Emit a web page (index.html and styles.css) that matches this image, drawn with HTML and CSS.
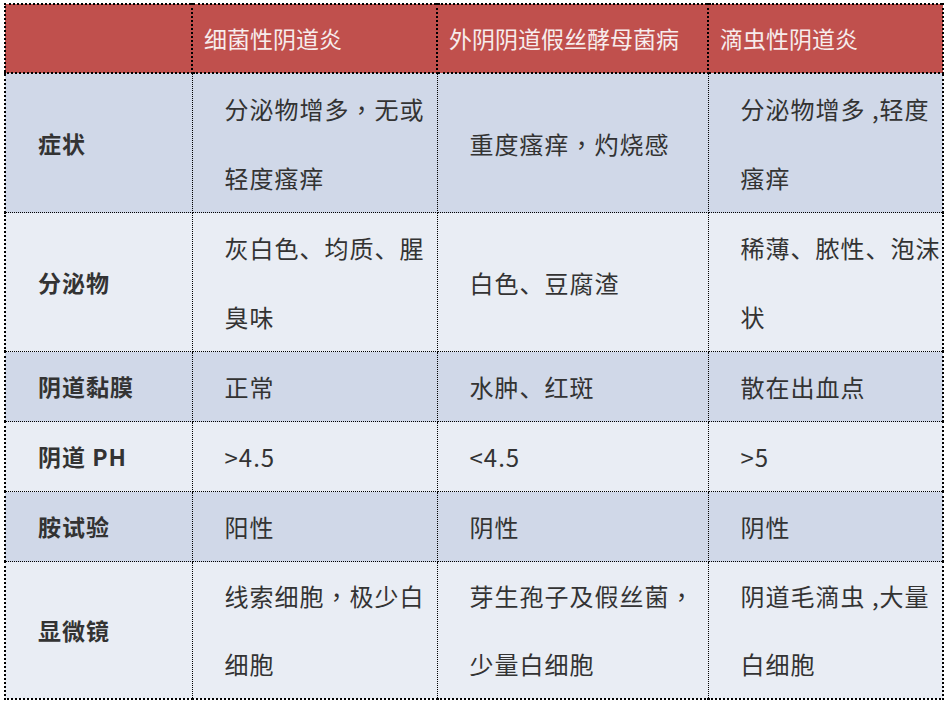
FILE: index.html
```html
<!DOCTYPE html>
<html lang="zh-CN">
<head>
<meta charset="utf-8">
<title>阴道炎对比</title>
<link rel="stylesheet" href="styles.css">
</head>
<body>
<table class="cmp">
  <colgroup>
    <col class="c1"><col class="c2"><col class="c3"><col class="c4">
  </colgroup>
  <thead>
    <tr>
      <th></th>
      <th>细菌性阴道炎</th>
      <th>外阴阴道假丝酵母菌病</th>
      <th>滴虫性阴道炎</th>
    </tr>
  </thead>
  <tbody>
    <tr class="dark">
      <td class="lbl">症状</td>
      <td>分泌物增多<span class="pc" lang="zh-TW">，</span>无或<br>轻度瘙痒</td>
      <td>重度瘙痒<span class="pc" lang="zh-TW">，</span>灼烧感</td>
      <td>分泌物增多 ,轻度<br>瘙痒</td>
    </tr>
    <tr class="light">
      <td class="lbl">分泌物</td>
      <td>灰白色、均质、腥<br>臭味</td>
      <td>白色、豆腐渣</td>
      <td>稀薄、脓性、泡沫<br>状</td>
    </tr>
    <tr class="dark">
      <td class="lbl">阴道黏膜</td>
      <td>正常</td>
      <td>水肿、红斑</td>
      <td>散在出血点</td>
    </tr>
    <tr class="light">
      <td class="lbl">阴道 PH</td>
      <td>&gt;4.5</td>
      <td>&lt;4.5</td>
      <td>&gt;5</td>
    </tr>
    <tr class="dark">
      <td class="lbl">胺试验</td>
      <td>阳性</td>
      <td>阴性</td>
      <td>阴性</td>
    </tr>
    <tr class="light last">
      <td class="lbl">显微镜</td>
      <td>线索细胞<span class="pc" lang="zh-TW">，</span>极少白<br>细胞</td>
      <td>芽生孢子及假丝菌<span class="pc" lang="zh-TW">，</span><br>少量白细胞</td>
      <td>阴道毛滴虫 ,大量<br>白细胞</td>
    </tr>
  </tbody>
</table>
</body>
</html>
```

FILE: styles.css
```css
html, body {
  margin: 0;
  padding: 0;
  background: #ffffff;
}
body {
  padding: 3px 0 0 4px;
  font-family: "Noto Sans CJK SC", "Noto Sans", sans-serif;
}
.cmp {
  border-collapse: collapse;
  table-layout: fixed;
  width: 940px;
  border: 2px dotted #000;
}
.c1 { width: 187px; }
.c2 { width: 245px; }
.c3 { width: 271px; }
.c4 { width: 235px; }
.cmp th {
  background: #c0504d;
  color: #f7ecec;
  font-weight: normal;
  font-size: 23px;
  text-align: left;
  height: 67px;
  padding: 0 0 0 11px;
  border-right: 2px dotted #000;
  border-bottom: 2px dotted #000;
  line-height: 1.2;
  vertical-align: middle;
}
.cmp td {
  font-size: 24px;
  letter-spacing: 1px;
  color: #333333;
  line-height: 69px;
  padding: 0 0 0 32px;
  border: 1px dotted #000;
  vertical-align: middle;
  white-space: nowrap;
}
.cmp .last td {
  line-height: 68px;
}
.cmp td.lbl {
  font-weight: bold;
  font-size: 23px;
  letter-spacing: 1px;
  padding-left: 32px;
}
.pc {
  font-family: "Noto Sans CJK TC", "Noto Sans CJK SC", sans-serif;
}
.dark td { background: #d0d8e8; }
.light td { background: #e9edf4; }
```
